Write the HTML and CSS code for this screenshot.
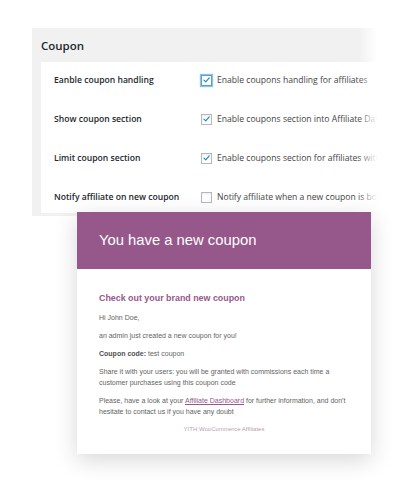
FILE: index.html
```html
<!DOCTYPE html>
<html>
<head>
<meta charset="utf-8">
<link rel="stylesheet" href="styles.css">
</head>
<body>
<div class="stage">
  <section class="panel">
    <h2 class="panel-title">Coupon</h2>
    <div class="panel-body">
      <div class="row">
        <span class="label">Eanble coupon handling</span>
        <span class="cb checked focus"><svg viewBox="0 0 12 12"><path d="M2.6 6.2 L5 8.6 L9.6 3.2" /></svg></span>
        <span class="desc">Enable coupons handling for affiliates</span>
      </div>
      <div class="row">
        <span class="label">Show coupon section</span>
        <span class="cb checked"><svg viewBox="0 0 12 12"><path d="M2.6 6.2 L5 8.6 L9.6 3.2" /></svg></span>
        <span class="desc">Enable coupons section into Affiliate Dashboard</span>
      </div>
      <div class="row">
        <span class="label">Limit coupon section</span>
        <span class="cb checked"><svg viewBox="0 0 12 12"><path d="M2.6 6.2 L5 8.6 L9.6 3.2" /></svg></span>
        <span class="desc">Enable coupons section for affiliates with coupons</span>
      </div>
      <div class="row">
        <span class="label">Notify affiliate on new coupon</span>
        <span class="cb"></span>
        <span class="desc">Notify affiliate when a new coupon is bound to them</span>
      </div>
    </div>
  </section>

  <article class="mail">
    <header class="mail-head">You have a new coupon</header>
    <div class="mail-body">
      <h3 class="mail-h">Check out your brand new coupon</h3>
      <p>Hi John Doe,</p>
      <p>an admin just created a new coupon for you!</p>
      <p><b>Coupon code:</b> test coupon</p>
      <p>Share it with your users: you will be granted with commissions each time a customer purchases using this coupon code</p>
      <p>Please, have a look at your <a href="#">Affiliate Dashboard</a> for further information, and don't hesitate to contact us if you have any doubt</p>
      <p class="foot">YITH WooCommerce Affiliates</p>
    </div>
  </article>
</div>
</body>
</html>
```
FILE: styles.css
```css
* { box-sizing: border-box; }
html, body { margin: 0; padding: 0; background: #fff; }
body { width: 418px; height: 480px; overflow: hidden; }

.stage {
  padding-top: 28px;
  padding-left: 32px;
}

.panel {
  position: relative;
  width: 354px;
  background: #f1f1f1;
  padding: 0 0 3px 9px;
  font-family: "Open Sans", "Noto Sans", sans-serif;
  color: #23282d;
  overflow: hidden;
}
.panel::after {
  content: "";
  position: absolute;
  top: 0;
  right: 0;
  bottom: 0;
  width: 28px;
  background: linear-gradient(to right, rgba(255,255,255,0), #fff 70%);
}

.panel-title {
  margin: 0;
  height: 34px;
  font-size: 11.5px;
  font-weight: 600;
  line-height: 34px;
  padding-top: 1px;
}

.panel-body {
  background: #fff;
  height: 151px;
  padding-left: 13px;
}

.row {
  display: flex;
  align-items: center;
  height: 39px;
  padding-bottom: 3px;
  white-space: nowrap;
}

.label {
  flex: none;
  width: 147px;
  font-size: 8.6px;
  font-weight: 600;
  color: #23282d;
}

.cb {
  flex: none;
  width: 11px;
  height: 11px;
  border: 1px solid #b4b9be;
  background: #fff;
  margin-right: 5px;
  display: flex;
  align-items: center;
  justify-content: center;
  box-shadow: inset 0 1px 2px rgba(0,0,0,0.08);
}
.cb.focus {
  border-color: #5b9dd9;
  box-shadow: 0 0 1px 1px rgba(30,140,190,0.5);
}
.cb svg { width: 10px; height: 10px; }
.cb path {
  fill: none;
  stroke: #1e8cbe;
  stroke-width: 1.6;
  stroke-linecap: round;
  stroke-linejoin: round;
}

.desc {
  font-size: 8.6px;
  color: #444;
}

.mail {
  position: relative;
  z-index: 2;
  margin-top: -4px;
  margin-left: 45px;
  width: 294px;
  height: 242px;
  background: #fff;
  box-shadow: 0 6px 22px rgba(0,0,0,0.16);
  font-family: "Liberation Sans", Arial, sans-serif;
}

.mail-head {
  height: 57px;
  background: #96588a;
  color: #fff;
  font-size: 14.8px;
  line-height: 57px;
  padding-left: 22px;
}

.mail-body {
  padding: 23px 22px 0 22px;
  color: #636363;
  font-size: 7px;
  line-height: 11px;
}

.mail-h {
  margin: 0 0 7px 0;
  color: #96588a;
  font-size: 8.9px;
  font-weight: bold;
  line-height: 13px;
}

.mail-body p { margin: 0 0 7px 0; }
.mail-body b { color: #505050; }
.mail-body a { color: #96588a; text-decoration: underline; }
.mail-body .foot {
  text-align: center;
  color: #b89fb3;
  font-size: 6px;
  margin-top: 4px;
}
```
